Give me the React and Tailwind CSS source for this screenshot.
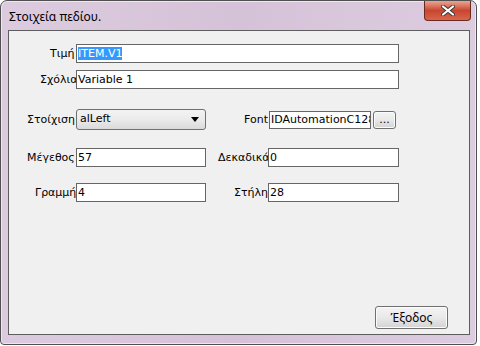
const FONT = { fontFamily: '"DejaVu Sans", Verdana, sans-serif' }

function Field({ label, labelW, pl, inputW, children }) {
  return (
    <div className="flex items-center">
      <span
        className={`${labelW} ${pl} overflow-hidden whitespace-nowrap text-[11px] leading-none text-black`}
      >
        {label}
      </span>
      <div
        className={`${inputW} h-[19px] shrink-0 border border-[#666666] bg-white pl-[1px] text-[11px] leading-[17px] text-black overflow-hidden whitespace-nowrap`}
      >
        {children}
      </div>
    </div>
  )
}

function Btn({ className, children }) {
  return (
    <div
      className={`flex items-center justify-center rounded-[3px] border border-[#707070] bg-gradient-to-b from-[#f4f4f4] via-[#e9e9e9] to-[#d3d3d3] text-black shadow-[inset_0_0_0_1px_#fbfbfb] ${className}`}
    >
      {children}
    </div>
  )
}

export default function App() {
  return (
    <div className="w-[480px] h-[346px] bg-white" style={FONT}>
      <div className="w-[477px] h-[345px] rounded-t-[7px] rounded-b-[4px] border border-[#505050] bg-gradient-to-r from-[#dccbdf] via-[#d6c2d8] to-[#dccce0] pl-[7px] pr-[6px] shadow-[inset_0_0_0_1px_#efe6f0]">

        {/* Title bar */}
        <div className="flex h-[29px] items-start justify-between">
          <span
            className="pt-[7px] pl-[1px] text-[12px] text-black"
            style={{ fontFamily: '"Noto Sans", "Open Sans", sans-serif' }}
          >
            Στοιχεία πεδίου.
          </span>
          <div className="mr-[-1px] flex h-[20px] w-[47px] items-center justify-center rounded-b-[4px] border border-t-0 border-[#6b2a20] bg-gradient-to-b from-[#e7a594] via-[#c9452f] to-[#d8654c]">
            <svg width="14" height="11" viewBox="0 0 14 11">
              <path
                d="M2 1.5 L12 9.5 M12 1.5 L2 9.5"
                stroke="#3a3a3a"
                strokeWidth="4"
                strokeLinecap="round"
              />
              <path
                d="M2 1.5 L12 9.5 M12 1.5 L2 9.5"
                stroke="#ffffff"
                strokeWidth="2.2"
                strokeLinecap="round"
              />
            </svg>
          </div>
        </div>

        {/* Client area */}
        <div className="flex h-[305px] flex-col border border-[#5d5d5d] bg-[#f0f0f0]">
          <div className="mt-[13px]">
            <Field label="Τιμή" labelW="w-[67px]" pl="pl-[41px]" inputW="w-[323px]">
              <span className="bg-[#3399ff] text-white">ITEM.V1</span>
            </Field>
          </div>
          <div className="mt-[7px]">
            <Field label="Σχόλια" labelW="w-[67px]" pl="pl-[31px]" inputW="w-[323px]">
              Variable 1
            </Field>
          </div>

          <div className="mt-[20px] flex items-center">
            <span className="w-[67px] pl-[18px] text-[11px] leading-none whitespace-nowrap overflow-hidden">
              Στοίχιση
            </span>
            <div className="flex h-[21px] w-[130px] items-center justify-between rounded-[3px] border border-[#707070] bg-gradient-to-b from-[#f3f3f3] via-[#ebebeb] to-[#dadada] pl-[3px] pr-[6px] text-[11px]">
              <span>alLeft</span>
              <svg width="8" height="5" viewBox="0 0 8 5">
                <path d="M0 0 H8 L4 5 Z" fill="#000" />
              </svg>
            </div>
            <span className="w-[63px] pl-[38px] text-[11px] leading-none whitespace-nowrap">
              Font
            </span>
            <div className="h-[18px] w-[102px] border border-[#666666] bg-white pl-[1px] text-[11px] leading-[16px] whitespace-nowrap overflow-hidden">
              IDAutomationC128M
            </div>
            <Btn className="ml-[2px] h-[18px] w-[23px] items-end pb-[3px] text-[11px] leading-none">...</Btn>
          </div>

          <div className="mt-[18px] flex">
            <Field label="Μέγεθος" labelW="w-[67px]" pl="pl-[18px]" inputW="w-[130px]">
              57
            </Field>
            <Field label="Δεκαδικά" labelW="w-[62px]" pl="pl-[12px]" inputW="w-[131px]">
              0
            </Field>
          </div>

          <div className="mt-[16px] flex">
            <Field label="Γραμμή" labelW="w-[67px]" pl="pl-[26px]" inputW="w-[130px]">
              4
            </Field>
            <Field label="Στήλη" labelW="w-[62px]" pl="pl-[28px]" inputW="w-[131px]">
              28
            </Field>
          </div>

          <div className="mt-auto flex justify-end pb-[5px] pr-[21px]">
            <Btn className="h-[23px] w-[73px] text-[12px]">
              <span style={{ fontFamily: '"Noto Sans", "Open Sans", sans-serif' }}>Έξοδος</span>
            </Btn>
          </div>
        </div>
      </div>
    </div>
  )
}
